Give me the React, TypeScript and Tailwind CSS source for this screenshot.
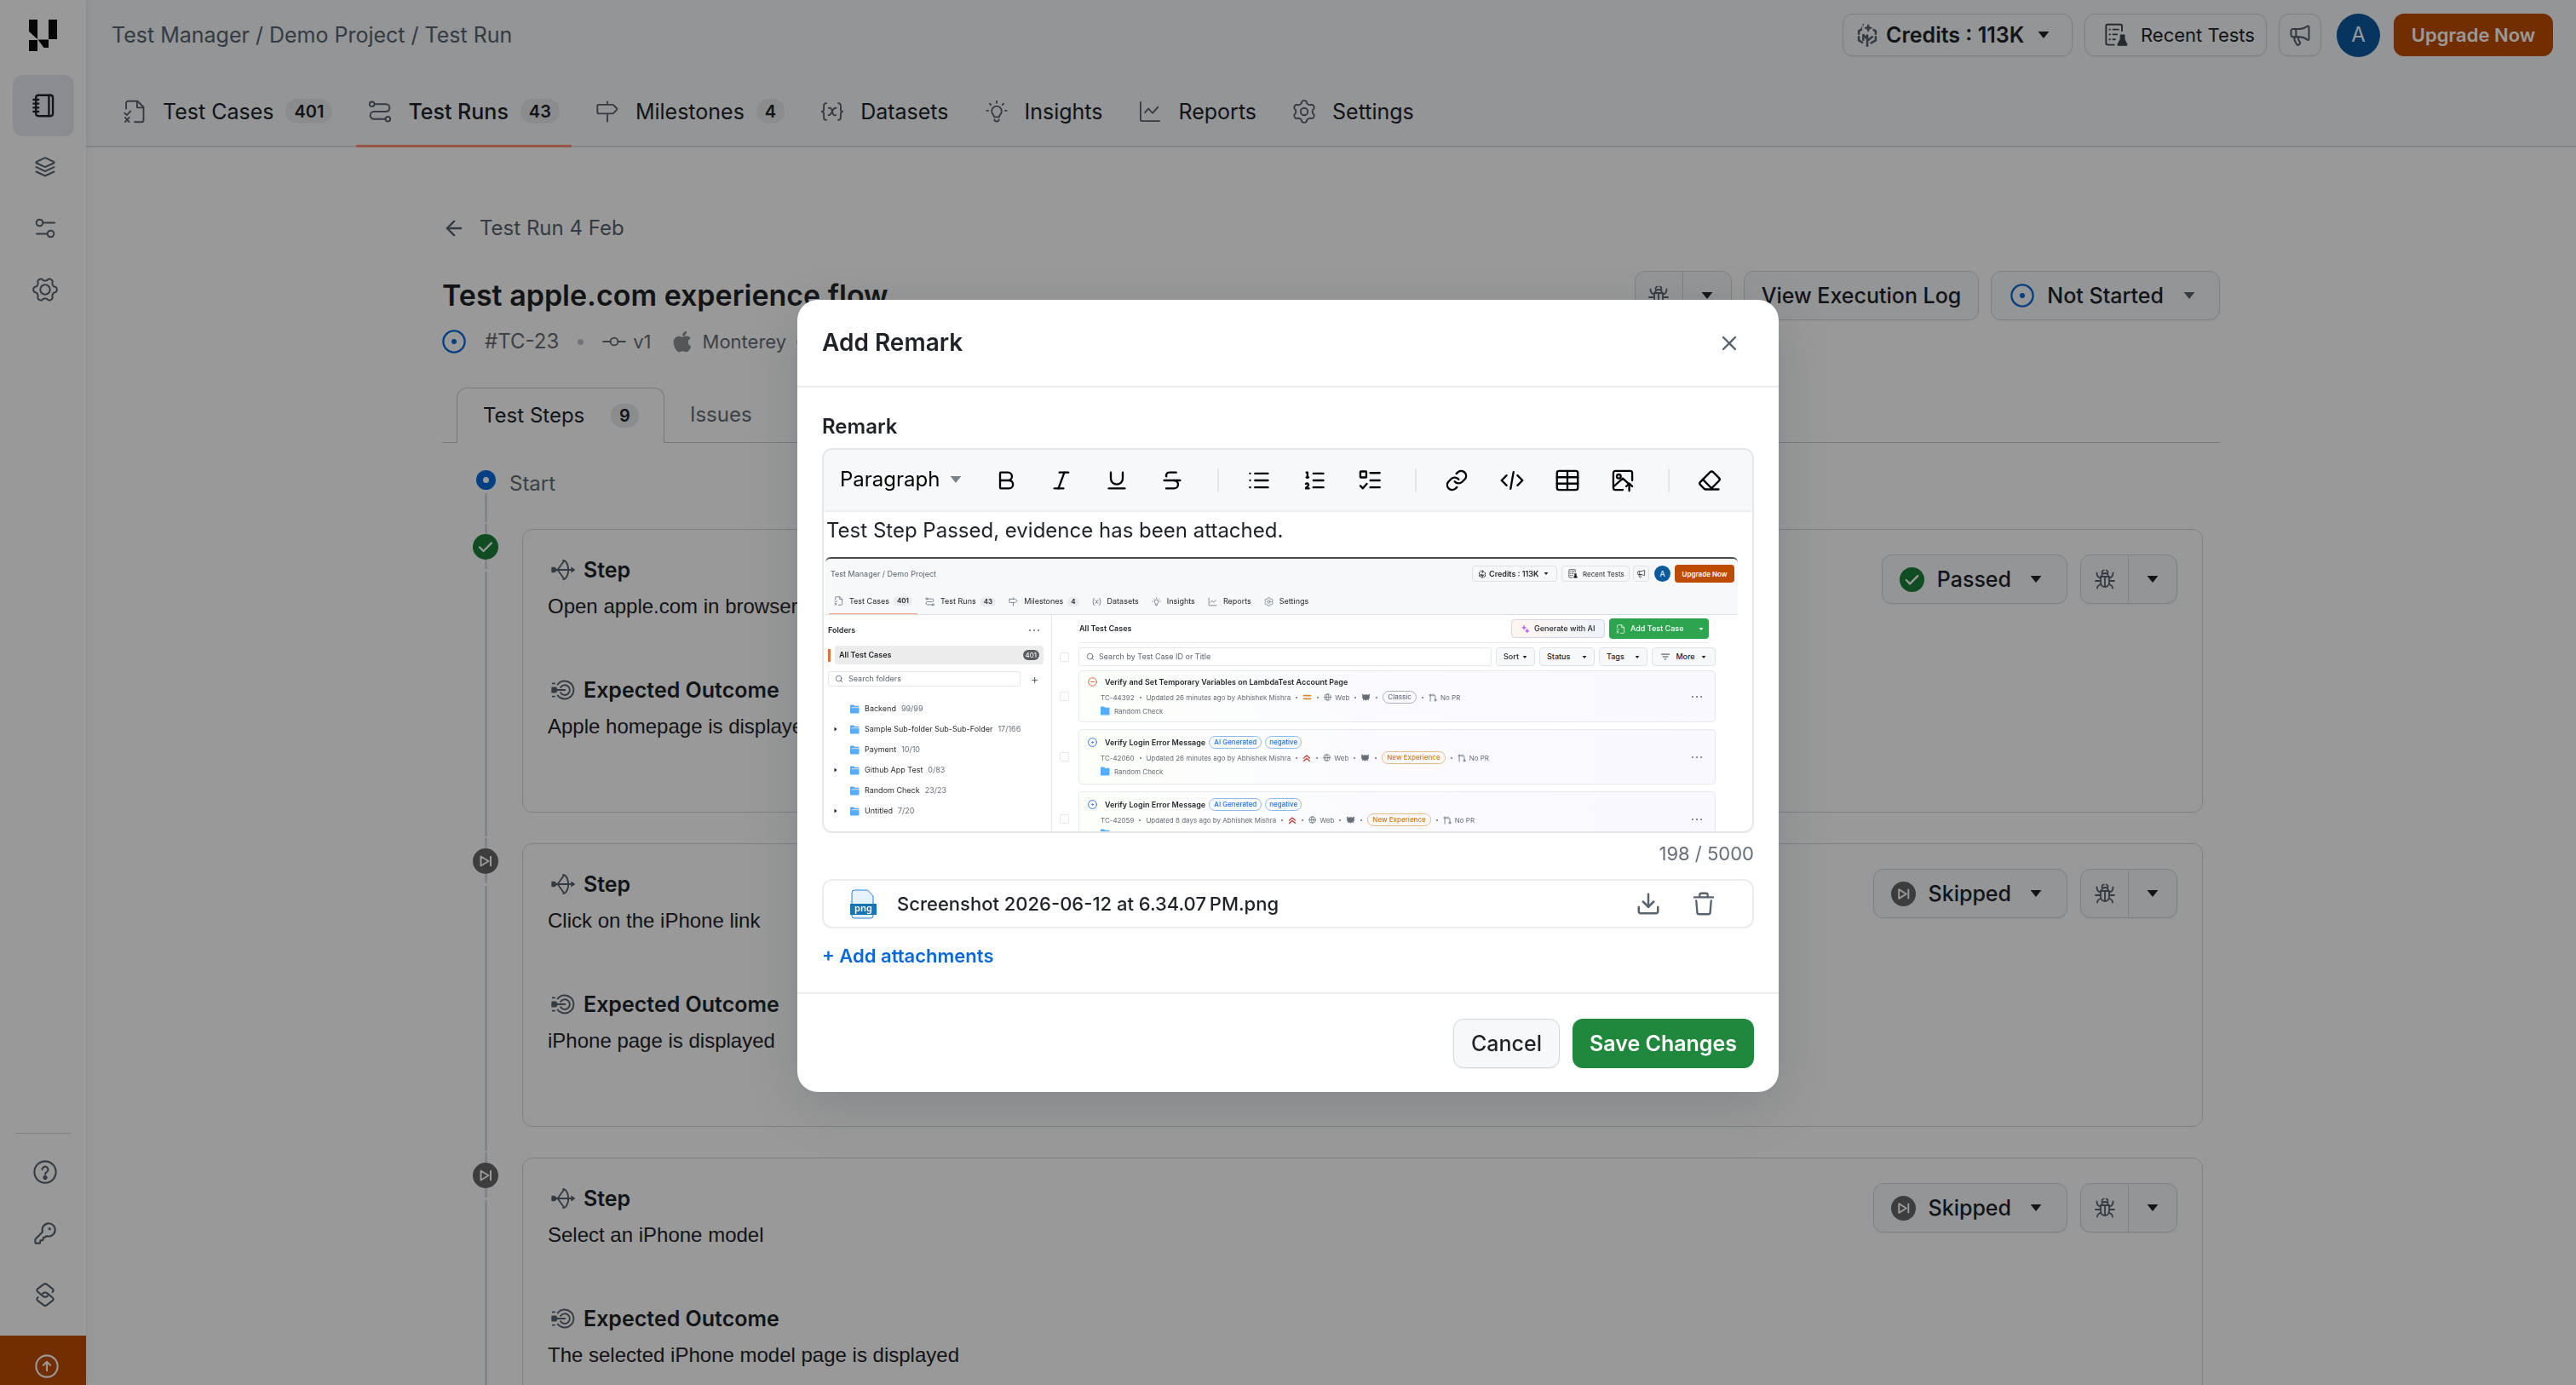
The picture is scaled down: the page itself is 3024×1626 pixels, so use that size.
import React from "react";
import {
  Bold,
  Italic,
  Underline,
  Strikethrough,
  List,
  ListOrdered,
  Eraser,
  Download,
  X,
  KeyRound,
  Megaphone,
  Search,
  Globe,
  ArrowLeft,
} from "lucide-react";
import { FaApple } from "react-icons/fa";

type IconProps = { className?: string; children?: React.ReactNode; strokeWidth?: number };

function Svg({ className, children, strokeWidth = 1.6 }: IconProps) {
  return (
    <svg
      viewBox="0 0 24 24"
      className={className}
      fill="none"
      stroke="currentColor"
      strokeWidth={strokeWidth}
      strokeLinecap="round"
      strokeLinejoin="round"
      aria-hidden="true"
    >
      {children}
    </svg>
  );
}

const Caret = ({ className = "h-2 w-3.5" }: { className?: string }) => (
  <svg viewBox="0 0 14 8" className={className} fill="currentColor" aria-hidden="true">
    <path d="M0.6 0h12.8L7 8z" />
  </svg>
);

/* Six-lobed gear outline; `phase` turns the first lobe away from the x axis. */
function gearPath(phase: number) {
  const points: string[] = [];
  for (let i = 0; i < 120; i++) {
    const a = (i / 120) * Math.PI * 2;
    const c = Math.cos(6 * (a - phase));
    const r = 9.7 + 1.35 * Math.sign(c) * Math.sqrt(Math.abs(c));
    points.push(`${(12 + r * Math.cos(a)).toFixed(2)} ${(12 + r * Math.sin(a)).toFixed(2)}`);
  }
  return "M" + points.join("L") + "z";
}
const gearFlat = gearPath(0);
const gearUpright = gearPath(Math.PI / 6);

const SidebarGear = (p: IconProps) => (
  <Svg {...p}>
    <path d={gearFlat} />
    <circle cx="12" cy="12" r="4.6" />
  </Svg>
);
const SettingsIcon = (p: IconProps) => (
  <Svg {...p}>
    <path d={gearUpright} />
    <circle cx="12" cy="12" r="3.6" />
  </Svg>
);

const CasesIcon = (p: IconProps) => (
  <Svg {...p}>
    <path d="M3.500 9V3.500a2 2 0 0 1 2-2h9.500l6 6V20.500a2 2 0 0 1-2 2H12" />
    <path d="M14.500 2v6h6M2 13.500l2.200 2L8 11.500M2.500 18l4 4.300M6.500 18l-4 4.300" />
  </Svg>
);
const RunsIcon = (p: IconProps) => (
  <Svg {...p}>
    <circle cx="4" cy="4.500" r="2.400" />
    <circle cx="20" cy="19.500" r="2.400" />
    <path d="M6.500 4.500H18a3.750 3.750 0 0 1 0 7.500H6a3.750 3.750 0 0 0 0 7.500h11.500" />
  </Svg>
);
const MilestoneIcon = (p: IconProps) => (
  <Svg {...p}>
    <path d="M12 2v3M12 14v8M3 5h13.500a3 3 0 0 1 2 .8l3 3a1 1 0 0 1 0 1.400l-3 3a3 3 0 0 1-2 .8H3a1 1 0 0 1-1-1V6a1 1 0 0 1 1-1z" />
  </Svg>
);
const DatasetIcon = (p: IconProps) => (
  <Svg {...p}>
    <path d="M6 3.500c-2 0-2.500 1-2.500 2.500v3.500c0 1.500-.5 2.500-2 2.500 1.500 0 2 1 2 2.500V18c0 1.500.5 2.500 2.500 2.500M18 3.500c2 0 2.500 1 2.500 2.500v3.500c0 1.500.5 2.500 2 2.500-1.500 0-2 1-2 2.500V18c0 1.500-.5 2.500-2.500 2.500" />
    <path d="M8.500 8.500c2-.8 2.500.5 3 2l1 3c.5 1.500 1 2.800 3 2M15.800 8.500c-2-.6-3 1-4 3.500s-1.800 4-3.600 3.500" />
  </Svg>
);
const InsightIcon = (p: IconProps) => (
  <Svg {...p}>
    <path d="M9.500 17.500c0-2-2.500-3-2.500-6a5 5 0 0 1 10 0c0 3-2.500 4-2.500 6zM9.800 20c0 1.200.8 2 2.200 2s2.200-.8 2.200-2M12 1.500v1.800M5 4l1.200 1.300M19 4l-1.200 1.300M2 11h1.500M20.500 11H22" />
  </Svg>
);
const ReportIcon = (p: IconProps) => (
  <Svg {...p}>
    <path d="M2.500 2.500V20a1.500 1.500 0 0 0 1.500 1.500h17.500M7 13l3.500-4 4 4.500L20 7.500" />
  </Svg>
);
const NotebookIcon = (p: IconProps) => (
  <Svg {...p}>
    <rect x="4.500" y="1.500" width="17" height="21" rx="2.500" />
    <path d="M17.500 1.500v21M2 6h5M2 10h5M2 14h5M2 18h5" />
  </Svg>
);
const LayersIcon = (p: IconProps) => (
  <Svg {...p}>
    <path d="M11 1.600 2 5.800c-.8.4-.8 1.300 0 1.700l9 4.200c.6.3 1.400.3 2 0l9-4.200c.8-.4.800-1.300 0-1.700l-9-4.200c-.6-.3-1.400-.3-2 0zM1.500 12.200l10.500 5 10.500-5M1.500 17.500l10.500 5 10.500-5" />
  </Svg>
);
const SlidersIcon = (p: IconProps) => (
  <Svg {...p}>
    <circle cx="5.500" cy="5.500" r="3.800" />
    <circle cx="18.500" cy="18.500" r="3.800" />
    <path d="M9.500 5.500H23M2 18.500h12.500" />
  </Svg>
);
const ChainIcon = (p: IconProps) => (
  <Svg {...p}>
    <path d="M14.500 13.200c-1.500 1.300-3.500 1.300-5 0L4.500 9c-1-.9-1-2 0-2.900l5.800-4.500c1-.8 2.400-.8 3.400 0l5.800 4.500c1 .9 1 2.300-.2 3.200" />
    <path d="M9.500 10.800c1.500-1.300 3.500-1.300 5 0l5 4.200c1 .9 1 2 0 2.900l-5.800 4.500c-1 .8-2.400.8-3.400 0L4.500 17.900c-1-.9-1-2.300.2-3.200" />
  </Svg>
);
const HelpIcon = (p: IconProps) => (
  <Svg {...p}>
    <circle cx="12" cy="12" r="10.800" />
    <path d="M9 9.500a3 3 0 1 1 4.500 2.600c-1 .6-1.500 1-1.500 2" />
    <circle cx="12" cy="17.500" r="1.300" fill="currentColor" />
  </Svg>
);
const UpIcon = (p: IconProps) => (
  <Svg {...p}>
    <circle cx="12" cy="12" r="10.800" />
    <path d="M12 16.500v-9M8.500 11 12 7.500l3.500 3.500" />
  </Svg>
);
const CreditsIcon = (p: IconProps) => (
  <Svg {...p}>
    <path d="M6 6.500 3.500 8v3M3.500 14v3.500L7 19.500M18.500 7l2 1.200V11M20.500 14v3.500L16 20M12 23V12.500M12 16l-4-4v5M12 18l5-4" strokeWidth="2.200" />
    <path d="M13 1.500l1 2.500 2.500 1L14 6l-1 2.500L12 6 9.500 5l2.500-1zM8 1v1.500M6.500 4v1" fill="currentColor" strokeWidth="1" />
  </Svg>
);
const RecentIcon = (p: IconProps) => (
  <Svg {...p}>
    <path d="M10 22H4a2 2 0 0 1-2-2V3a1.500 1.500 0 0 1 1.500-1.500h13A1.500 1.500 0 0 1 18 3v5M5.500 6.500h.5M9 6.500h5.500M5.500 11.500h.5M9 11.500h4M5.500 16.500h.5M9 16.500h2" />
    <path d="M16.500 12h4v4.500l2.500 5a.8.800 0 0 1-.7 1H14.500a.8.800 0 0 1-.7-1l2.700-5z" fill="currentColor" strokeWidth="1" />
  </Svg>
);
const BugIcon = (p: IconProps) => (
  <Svg {...p}>
    <path d="M7 9h10v7a5 5 0 0 1-10 0zM12 9v12M8 9a4 4 0 0 1 8 0M9 5.500C8 4 8.500 2 10.500 1.500M15 5.500c1-1.500.5-3.500-1.500-4M7 11 4.500 9.500C3 8.600 2.500 7 2.500 4.500M17 11l2.500-1.500c1.500-.9 2-2.500 2-5M7 14H1M17 14h6M7.500 17.500 5 19c-1.500.8-2 2-2 3.500M16.500 17.500 19 19c1.500.8 2 2 2 3.500" />
  </Svg>
);
const BowIcon = (p: IconProps) => (
  <Svg {...p}>
    <path d="M12 2.500c1 0 2 .3 2.700 1.200 3.400 4.300 3.400 12.300 0 16.600-.7.900-1.700 1.200-2.700 1.200M13 3 6.500 12l6.500 9M2 12h20" />
    <path d="M0.800 9.800h2.700L5.800 12l-2.300 2.200H.8zM20.500 9.800 23.500 12l-3 2.200z" fill="currentColor" strokeWidth="1" />
  </Svg>
);
const TargetIcon = (p: IconProps) => (
  <Svg {...p}>
    <path d="M6.500 6.500a9 9 0 1 1 0 11" />
    <path d="M9.500 9.500a5 5 0 1 1 0 5.200M4 12h10M1.500 5.500h2M1.500 18.500h2" />
    <path d="M0.800 9.500h4L6.500 12l-1.700 2.500h-4z" fill="currentColor" strokeWidth="1" />
  </Svg>
);
const CommitIcon = (p: IconProps) => (
  <Svg {...p}>
    <circle cx="12" cy="12" r="3.800" />
    <path d="M1 12h7.200M15.800 12H23" />
  </Svg>
);
const DotCircle = (p: IconProps) => (
  <Svg strokeWidth={2} {...p}>
    <circle cx="12" cy="12" r="10.800" />
    <circle cx="12" cy="12" r="1.600" fill="currentColor" />
  </Svg>
);
const ChecklistIcon = (p: IconProps) => (
  <Svg {...p}>
    <rect x="2.500" y="3" width="6" height="6" rx=".5" />
    <path d="M12.500 4.500H22M12.500 12H22M12.500 19H22M2.500 17.500l2.500 2.500 4-4.500" />
  </Svg>
);
const TableIcon = (p: IconProps) => (
  <Svg {...p}>
    <rect x="1.500" y="2.500" width="21" height="19" rx="2" />
    <path d="M1.500 8.800h21M1.500 15.200h21M12 2.500v19" />
  </Svg>
);
const ImageUpIcon = (p: IconProps) => (
  <Svg {...p}>
    <path d="M12 21.500H4.500a2 2 0 0 1-2-2v-15a2 2 0 0 1 2-2h15a2 2 0 0 1 2 2V12M3 18l9-8 5 4.500M18.500 22.500v-7M15.500 18l3-3 3 3" />
    <circle cx="8" cy="8" r="2" />
  </Svg>
);
const TrashIcon = (p: IconProps) => (
  <Svg {...p}>
    <path d="M2.500 5.500h19M8 5.500V2.800C8 2 8.500 1.500 9.300 1.500h5.400c.8 0 1.300.5 1.300 1.300v2.700M4.500 9l1 12a1.800 1.800 0 0 0 1.800 1.500h9.400a1.800 1.800 0 0 0 1.800-1.500l1-12" />
  </Svg>
);
const PrIcon = (p: IconProps) => (
  <Svg {...p}>
    <circle cx="5" cy="5" r="2.500" />
    <circle cx="19" cy="19" r="2.500" />
    <path d="M5 8v14M19 16V8a3 3 0 0 0-3-3h-4M14 2l-3 3 3 3" />
  </Svg>
);
const FolderIcon = ({ className = "", line = false }: { className?: string; line?: boolean }) => (
  <svg viewBox="0 0 24 24" className={className} aria-hidden="true">
    <path d="M1.500 1h7.500l3 3h9.500c.8 0 1.500.7 1.500 1.500v16c0 .8-.7 1.500-1.500 1.500h-20C.7 23 0 22.300 0 21.500v-19C0 1.700.7 1 1.500 1z" fill="#54aeff" />
    {line && <path d="M3 8h21" stroke="#fff" strokeWidth="1.600" />}
  </svg>
);

const CheckBadge = ({ className = "" }: { className?: string }) => (
  <svg viewBox="0 0 30 30" className={className} aria-hidden="true">
    <circle cx="15" cy="15" r="15" fill="#1a7f37" />
    <path d="M8 15.500l4.500 4.500 9.500-9.500" fill="none" stroke="#fff" strokeWidth="2.400" strokeLinecap="round" strokeLinejoin="round" />
  </svg>
);
const SkipBadge = ({ className = "" }: { className?: string }) => (
  <svg viewBox="0 0 30 30" className={className} aria-hidden="true">
    <circle cx="15" cy="15" r="15" fill="#666" />
    <path d="M9.500 9.500v11l9-5.500zM21 9v12" fill="none" stroke="#fff" strokeWidth="2" strokeLinejoin="round" />
  </svg>
);
const Logo = () => (
  <svg viewBox="0 0 33 37" className="h-[37px] w-[33px]" aria-label="Home">
    <path d="M0 0h10v23L0 14zM23 0h10v23H23zM0 24h10v13H0zM10.500 23.500H23V33h-5.500z" fill="#0a0a0a" />
  </svg>
);

const navTabs = [
  { label: "Test Cases", count: "401", Icon: CasesIcon },
  { label: "Test Runs", count: "43", Icon: RunsIcon, active: true },
  { label: "Milestones", count: "4", Icon: MilestoneIcon },
  { label: "Datasets", Icon: DatasetIcon },
  { label: "Insights", Icon: InsightIcon },
  { label: "Reports", Icon: ReportIcon },
  { label: "Settings", Icon: SettingsIcon },
];

function Sidebar() {
  const item = "flex h-[72px] w-[72px] items-center justify-center rounded-xl pl-1 text-[#59636e]";
  return (
    <aside className="z-10 flex w-[101px] shrink-0 flex-col items-center bg-white shadow-[2px_0_8px_rgba(0,0,0,0.06)]">
      <div className="flex h-[82px] items-center">
        <Logo />
      </div>
      <nav className="mt-1.5 flex flex-col items-center" aria-label="Products">
        <a href="#tests" aria-label="Tests" className="flex h-[72px] w-[72px] items-center justify-center rounded-xl bg-[#e6eaef] text-[#1f2328]">
          <NotebookIcon className="size-7" strokeWidth={2} />
        </a>
        <a href="#layers" aria-label="Layers" className={item}><LayersIcon className="size-6" strokeWidth={2} /></a>
        <a href="#filters" aria-label="Filters" className={item}><SlidersIcon className="size-6" strokeWidth={2} /></a>
        <a href="#settings" aria-label="Settings" className={item}><SidebarGear className="size-[30px]" strokeWidth={1.600} /></a>
      </nav>
      <div className="mt-auto flex flex-col items-center">
        <div className="mb-[9px] h-px w-[65px] bg-[#d0d7de]" />
        <a href="#help" aria-label="Help" className={item}><HelpIcon className="size-7" strokeWidth={1.800} /></a>
        <a href="#keys" aria-label="Access keys" className={item}><KeyRound className="size-7" strokeWidth={1.800} /></a>
        <a href="#integrations" aria-label="Integrations" className={item}><ChainIcon className="size-7" strokeWidth={1.800} /></a>
      </div>
      <a href="#upgrade" aria-label="Upgrade" className="mt-3 flex h-[58px] w-full justify-center bg-[#bf4b00] pl-2 pt-[22px] text-white">
        <UpIcon className="size-7" strokeWidth={1.800} />
      </a>
    </aside>
  );
}

function Header() {
  const btn = "flex h-[50px] items-center rounded-xl border border-[#d0d7de] bg-[#f6f8fa] shadow-xs";
  return (
    <header className="border-b-2 border-[#d8dee4] bg-[#f6f8fa]">
      <div className="flex h-[82px] items-center pl-[30px] pr-[27px]">
        <nav aria-label="Breadcrumb" className="flex gap-[7px] text-[25px] text-[#59636e]">
          <a href="#tm">Test Manager</a>
          <span>/</span>
          <a href="#demo">Demo Project</a>
          <span>/</span>
          <a href="#run">Test Run</a>
        </nav>
        <div className="ml-auto flex items-center">
          <button className={btn + " w-[270px] pl-[14px] text-[25px] font-semibold"}>
            <CreditsIcon className="size-7 text-[#59636e]" />
            <span className="ml-2">Credits : 113K</span>
            <Caret className="ml-4 h-2 w-3.5" />
          </button>
          <button className={btn + " ml-[14px] w-[214px] pl-[22px] text-[22px]"}>
            <RecentIcon className="size-7 text-[#3f4650]" />
            <span className="ml-[15px]">Recent Tests</span>
          </button>
          <button aria-label="Announcements" className={btn + " ml-[14px] w-[50px] justify-center"}>
            <Megaphone className="size-7 text-[#59636e]" strokeWidth={1.800} />
          </button>
          <button className="ml-[18px] size-[51px] rounded-full bg-[#0b5a9e] text-[24px] text-white">A</button>
          <button className="ml-4 h-[50px] w-[187px] rounded-xl bg-[#bf4b00] text-[22px] font-semibold text-white">Upgrade Now</button>
        </div>
      </div>
      <nav aria-label="Project" className="ml-[29px] flex h-[89px] gap-[14px]">
        {navTabs.map(({ label, count, Icon, active }) => (
          <a
            key={label}
            href={"#" + label}
            className={"relative flex items-center px-[14px] pt-2 text-[25px] " + (active ? "font-medium" : "")}
          >
            <Icon className="size-7 text-[#59636e]" strokeWidth={1.600} />
            <span className="ml-[19px]">{label}</span>
            {count && (
              <span className="ml-[14px] flex h-[29px] items-center rounded-full bg-[#e8eaed] px-[10px] text-[20px] font-semibold">{count}</span>
            )}
            {active && <span className="absolute inset-x-0 -bottom-0.5 h-[3px] bg-[#fd8c73]" />}
          </a>
        ))}
      </nav>
    </header>
  );
}

function BugSplit() {
  return (
    <div className="flex h-[58px] divide-x divide-[#d0d7de] rounded-xl border border-[#d0d7de] bg-[#f6f8fa] shadow-xs">
      <button aria-label="Report a bug" className="flex w-[56px] items-center justify-center text-[#59636e]">
        <BugIcon className="size-6" strokeWidth={1.800} />
      </button>
      <button aria-label="More bug actions" className="flex w-[56px] items-center justify-center">
        <Caret />
      </button>
    </div>
  );
}

const secondaryBtn = "flex h-[58px] items-center rounded-xl border border-[#d0d7de] bg-[#f6f8fa] px-5 text-[25px] font-medium shadow-xs";

type Step = { step: string; outcome: string; passed?: boolean };
const steps: Step[] = [
  { step: "Open apple.com in browser", outcome: "Apple homepage is displayed", passed: true },
  { step: "Click on the iPhone link", outcome: "iPhone page is displayed" },
  { step: "Select an iPhone model", outcome: "The selected iPhone model page is displayed" },
];

function StepRow({ step, outcome, passed }: Step) {
  const Badge = passed ? CheckBadge : SkipBadge;
  const heading = "flex h-9 items-center gap-2.5 pl-1 text-[25px] font-semibold";
  const desc = "mt-2.5 font-['Liberation_Sans',Arial,sans-serif] text-[24px] leading-[30px]";
  return (
    <li className="flex">
      <div className="flex w-[94px] flex-col items-center pl-2">
        <div className="h-3 w-[3px] bg-[#d8dee4]" />
        <Badge className="size-[30px]" />
        <div className="h-[11px] w-[3px] bg-[#d8dee4]" />
        <div className="mb-0.5 mt-[3px] w-[3px] flex-1 bg-[#d8dee4]" />
      </div>
      <article className="mb-[30px] mt-1.5 flex flex-1 items-start justify-between rounded-xl border border-[#d0d7de] pb-[85px] pl-[29px] pr-[29px] pt-[29px]">
        <div>
          <h3 className={heading}><BowIcon className="size-7 text-[#59636e]" />Step</h3>
          <p className={desc}>{step}</p>
          <h3 className={heading + " mt-[65px]"}><TargetIcon className="size-7 text-[#59636e]" />Expected Outcome</h3>
          <p className={desc}>{outcome}</p>
        </div>
        <div className="flex gap-[15px]">
          <button className={secondaryBtn}>
            <Badge className="size-[29px]" />
            <span className="ml-[15px] mr-[22px]">{passed ? "Passed" : "Skipped"}</span>
            <Caret className="mr-[9px] h-2 w-3.5" />
          </button>
          <BugSplit />
        </div>
      </article>
    </li>
  );
}

function Page() {
  return (
    <main className="mx-auto w-full max-w-[2087px] pt-[76px]">
      <a href="#back" className="flex h-[38px] items-center text-[24px] text-[#59636e]">
        <ArrowLeft className="size-7" strokeWidth={2} />
        <span className="ml-4">Test Run 4 Feb</span>
      </a>
      <div className="mt-[31px] flex items-center justify-between">
        <h1 className="text-[34px] font-semibold">Test apple.com experience flow</h1>
        <div className="flex gap-[14px]">
          <BugSplit />
          <button className={secondaryBtn}>View Execution Log</button>
          <button className={secondaryBtn}>
            <DotCircle className="ml-0.5 size-7 text-[#0969da]" />
            <span className="mx-[15px]">Not Started</span>
            <Caret className="ml-2 mr-2 h-2 w-3.5 text-[#59636e]" />
          </button>
        </div>
      </div>
      <div className="mt-2.5 flex h-[30px] items-center text-[22px] text-[#656d76]">
        <DotCircle className="size-7 text-[#0969da]" />
        <span className="ml-[22px] text-[24px]">#TC-23</span>
        <span className="mx-[22px] size-[7px] rounded-full bg-[#bcc2c9]" />
        <CommitIcon className="size-7" />
        <span className="ml-2">v1</span>
        <FaApple className="ml-[22px] size-7 text-[#8c8f93]" />
        <span className="ml-2.5">Monterey</span>
        <span className="mx-3 size-[7px] rounded-full bg-[#bcc2c9]" />
      </div>
      <nav aria-label="Run details" className="mt-[39px] flex h-[65px] border-b border-[#c8cdd3] pl-[17px] text-[24px]">
        <a href="#steps" className="-mb-px flex w-[244px] items-center justify-between rounded-t-xl border border-b-0 border-[#c8cdd3] bg-white pl-[30px] pr-[29px]">
          Test Steps
          <span className="flex h-7 w-[33px] items-center justify-center rounded-full bg-[#e8eaed] text-[20px] font-semibold">9</span>
        </a>
        <a href="#issues" className="ml-[30px] flex items-center text-[#656d76]">Issues</a>
      </nav>
      <div className="flex h-[95px]">
        <div className="flex w-[79px] flex-col items-center pb-0.5 pl-[23px]">
          <span className="mt-8 flex size-[23px] shrink-0 items-center justify-center rounded-full bg-[#0969da]">
            <span className="size-[7px] rounded-full bg-white" />
          </span>
          <span className="mt-1 w-[3px] flex-1 bg-[#d8dee4]" />
        </div>
        <span className="pt-[34px] text-[24px] text-[#656d76]">Start</span>
      </div>
      <ol className="pr-5">
        {steps.map((s) => (
          <StepRow key={s.step} {...s} />
        ))}
      </ol>
    </main>
  );
}

/* ---------- Evidence preview embedded in the remark ---------- */

const MiniDot = () => <span className="size-0.5 shrink-0 rounded-full bg-[#656d76]" />;
const MiniCheck = ({ className = "" }: { className?: string }) => (
  <span className={"size-[11px] shrink-0 rounded-xs border border-[#e4e7eb] " + className} />
);
const miniBtn = "flex items-center rounded border border-[#dfe3e8] bg-[#f6f8fa]";

const miniFolders = [
  { name: "Backend", count: "99/99" },
  { name: "Sample Sub-folder Sub-Sub-Folder", count: "17/166", open: true },
  { name: "Payment", count: "10/10" },
  { name: "Github App Test", count: "0/83", open: true },
  { name: "Random Check", count: "23/23" },
  { name: "Untitled", count: "7/20", open: true },
];

type Case = { id: string; title: string; updated: string; tag: string; folder?: string };
const miniCases: Case[] = [
  { id: "TC-44392", title: "Verify and Set Temporary Variables on LambdaTest Account Page", updated: "Updated 26 minutes ago by Abhishek Mishra", tag: "Classic", folder: "Random Check" },
  { id: "TC-42060", title: "Verify Login Error Message", updated: "Updated 26 minutes ago by Abhishek Mishra", tag: "New Experience", folder: "Random Check" },
  { id: "TC-42059", title: "Verify Login Error Message", updated: "Updated 8 days ago by Abhishek Mishra", tag: "New Experience" },
];

function MiniCase({ id, title, updated, tag, folder }: Case) {
  const classic = tag === "Classic";
  return (
    <div className="flex items-center">
      <MiniCheck className="mr-[11px]" />
      <div
        className={
          "flex flex-1 items-center justify-between rounded border border-[#e6e9ed] bg-linear-to-r from-[#fdfffa] via-[#fafaff] to-[#f9f8fe] pl-2.5 pr-[15px] " +
          (classic ? "h-[61px]" : "h-[65px]")
        }
      >
        <div>
          <div className="flex h-4 items-center text-[9px] font-semibold">
            {classic ? (
              <Svg className="size-[11px] text-[#d1572b]" strokeWidth={2}><circle cx="12" cy="12" r="10.500" /><path d="M8 12h8" /></Svg>
            ) : (
              <DotCircle className="size-[11px] text-[#1f6feb]" />
            )}
            <span className="ml-[9px]">{title}</span>
            {!classic && (
              <>
                <span className="ml-1 rounded-full border border-[#8db9f2] px-[5px] text-[8px] leading-[13px] font-medium text-[#1f6feb]">AI Generated</span>
                <span className="ml-1 rounded-full border border-[#8db9f2] px-1 text-[8px] leading-[13px] font-medium text-[#1f6feb]">negative</span>
              </>
            )}
          </div>
          <div className="mt-0.5 flex h-4 items-center gap-1.5 pl-[15px] text-[8px] text-[#656d76]">
            <span>{id}</span>
            <MiniDot />
            <span>{updated}</span>
            <MiniDot />
            {classic ? (
              <Svg className="size-[11px] text-[#d98a2b]" strokeWidth={3.500}><path d="M3 8h18M3 16h18" /></Svg>
            ) : (
              <Svg className="size-2.5 text-[#c0392b]" strokeWidth={3}><path d="M4 12l8-7 8 7M4 20l8-7 8 7" /></Svg>
            )}
            <MiniDot />
            <Globe className="size-[9px]" />
            <span className="-ml-0.5">Web</span>
            <MiniDot />
            <svg viewBox="0 0 24 24" className="size-[11px]" fill="#656d76" aria-hidden="true">
              <path d="M2 3l5 3c3-1.500 7-1.500 10 0l5-3-1 7 1 4-3 1 1 5-5-2-3 3-3-3-5 2 1-5-3-1 1-4z" />
            </svg>
            <MiniDot />
            <span className={"rounded-full border px-[5px] leading-[13px] font-medium " + (classic ? "border-[#a9afb6] text-[#656d76]" : "border-[#e3b98a] text-[#cf7a14]")}>{tag}</span>
            <MiniDot />
            <PrIcon className="size-2.5" strokeWidth={2} />
            <span className="-ml-0.5">No PR</span>
          </div>
          <div className="flex h-4 items-center pl-[15px] text-[8px] text-[#656d76]">
            <FolderIcon className="mr-[5px] size-[11px]" />
            {folder}
          </div>
        </div>
        <span className="flex gap-[3px]"><MiniDot /><MiniDot /><MiniDot /></span>
      </div>
    </div>
  );
}

function EvidencePreview() {
  return (
    <figure aria-label="Evidence" className="mr-[17px] ml-0.5 bg-white text-[9px] leading-[14px]">
      <div className="h-[67px] rounded-t-md border-t-2 border-[#4a4a4a] bg-[#f6f8fa]">
        <div className="flex h-[35px] items-center pl-1.5 pr-1">
          <span className="text-[#59636e]">Test Manager / Demo Project</span>
          <div className="ml-auto flex items-center">
            <span className={miniBtn + " h-[19px] w-[100px] pl-1.5 font-semibold"}>
              <CreditsIcon className="mr-[3px] size-2.5" />Credits : 113K<Caret className="ml-1.5 h-[3px] w-1.5" />
            </span>
            <span className={miniBtn + " ml-[5px] h-[19px] w-20 pl-[7px] text-[8px]"}>
              <RecentIcon className="mr-[6px] size-[11px]" />Recent Tests
            </span>
            <span className={miniBtn + " ml-1 size-[19px] justify-center"}><Megaphone className="size-[11px]" strokeWidth={1.600} /></span>
            <span className="ml-1.5 flex size-[19px] items-center justify-center rounded-full bg-[#0b5a9e] text-white">A</span>
            <span className="ml-[5px] flex h-[21px] w-[70px] items-center justify-center rounded bg-[#bf4b00] text-[8px] font-semibold text-white">Upgrade Now</span>
          </div>
        </div>
        <div className="ml-1 flex h-[30px] gap-[3px]">
          {navTabs.map(({ label, count, Icon }, i) => (
            <span key={label} className={"flex items-center px-1.5 " + (i === 0 ? "border-b border-[#f5a583]" : "")}>
              <Icon className="mr-[7px] size-[11px] text-[#59636e]" strokeWidth={1.600} />
              {label}
              {count && <span className="ml-[5px] rounded-full bg-[#e8eaed] px-1 text-[8px] leading-[11px] font-semibold">{count}</span>}
            </span>
          ))}
        </div>
      </div>
      <div className="flex border-t border-[#d8dee4]">
        <div className="flex w-[266px] shrink-0 flex-col border-r border-[#e4e7eb] pl-[3px] pr-[9px]">
          <div className="flex h-9 items-center justify-between pr-[5px] font-semibold">
            Folders
            <span className="flex gap-[3px]"><MiniDot /><MiniDot /><MiniDot /></span>
          </div>
          <div className="flex items-center">
            <span className="mr-[5px] h-[15px] w-[3px] bg-[#e0703a]" />
            <span className="flex h-[22px] flex-1 items-center justify-between rounded bg-[#ececec] px-[5px] font-semibold">
              All Test Cases
              <span className="rounded-full bg-[#5a5d61] px-[3px] text-[8px] leading-[12px] font-normal text-white">401</span>
            </span>
          </div>
          <div className="mt-2 flex items-center">
            <span className="flex h-[18px] w-[226px] items-center rounded-xs border border-[#e4e7eb] pl-[7px] text-[#59636e]">
              <Search className="mr-1.5 size-2.5" />Search folders
            </span>
            <span className="ml-3 text-[14px] text-[#59636e]">+</span>
          </div>
          <div className="mt-[14px]">
            {miniFolders.map(({ name, count, open }) => (
              <div key={name} className="flex h-6 items-center pl-[7px]">
                <svg viewBox="0 0 4 6" className={"mr-[15px] h-1.5 w-1 " + (open ? "" : "invisible")} aria-hidden="true">
                  <path d="M0.500 0.500 3.500 3l-3 2.500z" fill="#1f2328" />
                </svg>
                <FolderIcon className="size-[11px]" line />
                <span className="ml-1.5">{name}</span>
                <span className="ml-1.5 text-[#656d76]">{count}</span>
              </div>
            ))}
          </div>
        </div>
        <div className="flex flex-1 flex-col pl-[9px] pr-[26px]">
          <div className="ml-[23px] mr-2 flex h-[33px] items-center border-b border-[#e8ebee]">
            <span className="font-semibold">All Test Cases</span>
            <span className="ml-auto flex h-[22px] w-[110px] items-center rounded border border-[#d9d3e6] bg-linear-to-r from-[#fff5ee] to-[#eef4fc] pl-2.5 font-medium">
              <Svg className="mr-[5px] size-[11px] text-[#b35cf0]" strokeWidth={1}>
                <path d="M9 3l1.500 4 4 1.500-4 1.500L9 14l-1.500-4-4-1.500 4-1.500zM17 12l1.500 3.500L22 17l-3.500 1.500L17 22l-1.500-3.500L12 17l3.500-1.500z" fill="currentColor" />
              </Svg>
              Generate with AI
            </span>
            <span className="ml-[5px] flex h-6 w-[117px] items-center rounded bg-[#2da44e] pl-2 font-medium text-white">
              <CasesIcon className="mr-[6px] size-[11px]" />Add Test Case<Caret className="ml-auto mr-1.5 h-[3px] w-1.5" />
            </span>
          </div>
          <div className="mt-[5px] flex items-center">
            <MiniCheck className="mr-[11px]" />
            <span className="flex h-[22px] flex-1 items-center rounded-xs border border-[#e4e7eb] pl-2 text-[#59636e]">
              <Search className="mr-[5px] size-2.5" />Search by Test Case ID or Title
            </span>
            <span className={miniBtn + " ml-[5px] h-[22px] w-[46px] justify-between px-2 font-medium"}>Sort<Caret className="h-[3px] w-1.5" /></span>
            <span className={miniBtn + " ml-[5px] h-[22px] w-[65px] justify-between px-2 font-medium"}>Status<Caret className="h-[3px] w-1.5" /></span>
            <span className={miniBtn + " ml-[5px] h-[22px] w-[57px] justify-between px-2 font-medium"}>Tags<Caret className="h-[3px] w-1.5" /></span>
            <span className={miniBtn + " ml-[5px] h-[22px] w-[75px] justify-between px-2.5 font-medium"}>
              <Svg className="size-2.5" strokeWidth={2}><path d="M1 5h22M5 12h14M10 19h4" /></Svg>More<Caret className="h-[3px] w-1.5" />
            </span>
          </div>
          <div className="mt-[5px] flex flex-col gap-2">
            {miniCases.map((c) => (
              <MiniCase key={c.id} {...c} />
            ))}
          </div>
        </div>
      </div>
    </figure>
  );
}

/* ---------- Dialog ---------- */

function Tool({ label, children }: { label: string; children: React.ReactNode }) {
  return (
    <button aria-label={label} className="flex h-12 w-[65px] items-center justify-center">
      {children}
    </button>
  );
}
const Divider = () => <span className="ml-[21px] mr-[14px] h-7 w-0.5 bg-[#e2e5e9]" />;

function PngIcon() {
  return (
    <svg viewBox="0 0 31 35" className="h-[35px] w-[31px]" aria-hidden="true">
      <path d="M5 1h15.500L27 8v23a3 3 0 0 1-3 3H5a3 3 0 0 1-3-3V4a3 3 0 0 1 3-3z" fill="#e6f3ff" stroke="#2f7de0" />
      <rect x="0" y="17" width="31" height="13" fill="#1676b5" />
      <text x="15.500" y="26" textAnchor="middle" fontSize="11" fontFamily="'Noto Sans', sans-serif" fontWeight="600" fill="#fff">png</text>
    </svg>
  );
}

function RemarkDialog() {
  return (
    <section role="dialog" aria-modal="true" aria-labelledby="remark-title" className="w-[1152px] rounded-3xl bg-white shadow-[0_16px_64px_rgba(66,74,83,0.25)]">
      <div className="flex h-[103px] items-center justify-between border-b-2 border-[#ededee] pl-[29px] pr-11">
        <h2 id="remark-title" className="text-[28px] font-semibold">Add Remark</h2>
        <button aria-label="Close" className="text-[#59636e]"><X className="size-7" strokeWidth={2} /></button>
      </div>
      <div className="px-[29px] pb-[27px] pt-[30px]">
        <h3 id="remark-label" className="text-[24px] leading-8 font-semibold">Remark</h3>
        <div className="mt-[9px] h-[452px] overflow-hidden rounded-xl border-2 border-[#e4e6ea]">
          <div role="toolbar" aria-label="Formatting" className="flex h-[73px] items-center border-b-2 border-[#eceef0] bg-[#f6f8fa] pl-[19px] text-black">
            <button className="flex w-[162px] items-center text-[24px]">
              Paragraph <Caret className="ml-3 h-2 w-3.5 text-[#7b828a]" />
            </button>
            <Tool label="Bold"><Bold className="size-7" strokeWidth={2} /></Tool>
            <Tool label="Italic"><Italic className="size-7" strokeWidth={2} /></Tool>
            <Tool label="Underline"><Underline className="size-7" strokeWidth={2} /></Tool>
            <Tool label="Strikethrough"><Strikethrough className="size-7" strokeWidth={2} /></Tool>
            <Divider />
            <Tool label="Bulleted list"><List className="size-7" strokeWidth={2} /></Tool>
            <Tool label="Numbered list"><ListOrdered className="size-7" strokeWidth={2} /></Tool>
            <Tool label="Checklist"><ChecklistIcon className="size-7" strokeWidth={2} /></Tool>
            <Divider />
            <Tool label="Link">
              <Svg className="size-7" strokeWidth={2}>
                <path d="M10 13a5 5 0 0 0 7.500.5l3-3a5 5 0 0 0-7-7l-1.800 1.700M14 11a5 5 0 0 0-7.500-.5l-3 3a5 5 0 0 0 7 7l1.800-1.700" />
              </Svg>
            </Tool>
            <Tool label="Code">
              <Svg className="size-7" strokeWidth={2}><path d="M6.500 7 1.500 12l5 5M17.500 7l5 5-5 5M13.500 3.500l-3 17" /></Svg>
            </Tool>
            <Tool label="Table"><TableIcon className="size-7" strokeWidth={2} /></Tool>
            <Tool label="Image"><ImageUpIcon className="size-7" strokeWidth={2} /></Tool>
            <Divider />
            <Tool label="Clear formatting"><Eraser className="size-7" strokeWidth={2} /></Tool>
          </div>
          <div role="textbox" aria-multiline="true" aria-labelledby="remark-label" contentEditable suppressContentEditableWarning className="h-[375px] overflow-hidden">
            <p className="mb-3 pl-[3px] pt-[3px] text-[24px] leading-[38px]">Test Step Passed, evidence has been attached.</p>
            <EvidencePreview />
          </div>
        </div>
        <p className="mt-[9px] text-right text-[22px] leading-[30px] text-[#656d76]">198 / 5000</p>
        <div className="mt-[15px] flex h-[58px] items-center rounded-xl border-2 border-[#ebecee] pl-[31px] pr-[43px]">
          <PngIcon />
          <span className="ml-6 text-[22px] font-medium">{"Screenshot 2026-06-12 at 6.34.07\u202fPM.png"}</span>
          <button aria-label="Download" className="ml-auto text-[#59636e]"><Download className="size-[30px]" strokeWidth={2} /></button>
          <button aria-label="Delete" className="ml-9 text-[#59636e]"><TrashIcon className="size-7" strokeWidth={2} /></button>
        </div>
        <button className="mt-4 block text-[22px] leading-8 font-semibold text-[#0969da]">+ Add attachments</button>
      </div>
      <div className="flex justify-end gap-[15px] border-t-2 border-[#ededee] px-[29px] pb-7 pt-[29px]">
        <button className={secondaryBtn}>Cancel</button>
        <button className="h-[58px] rounded-xl bg-[#1f883d] px-5 text-[25px] font-semibold text-white shadow-xs">Save Changes</button>
      </div>
    </section>
  );
}

export default function App() {
  return (
    <div className="flex h-screen overflow-hidden bg-white font-['Inter',sans-serif] leading-[1.2] text-[#1f2328]">
      <Sidebar />
      <div className="flex min-w-0 flex-1 flex-col">
        <Header />
        <div className="min-h-0 flex-1 overflow-hidden">
          <Page />
        </div>
      </div>
      <div className="fixed inset-0 z-20 flex items-center justify-center bg-black/40 pt-2">
        <RemarkDialog />
      </div>
    </div>
  );
}
